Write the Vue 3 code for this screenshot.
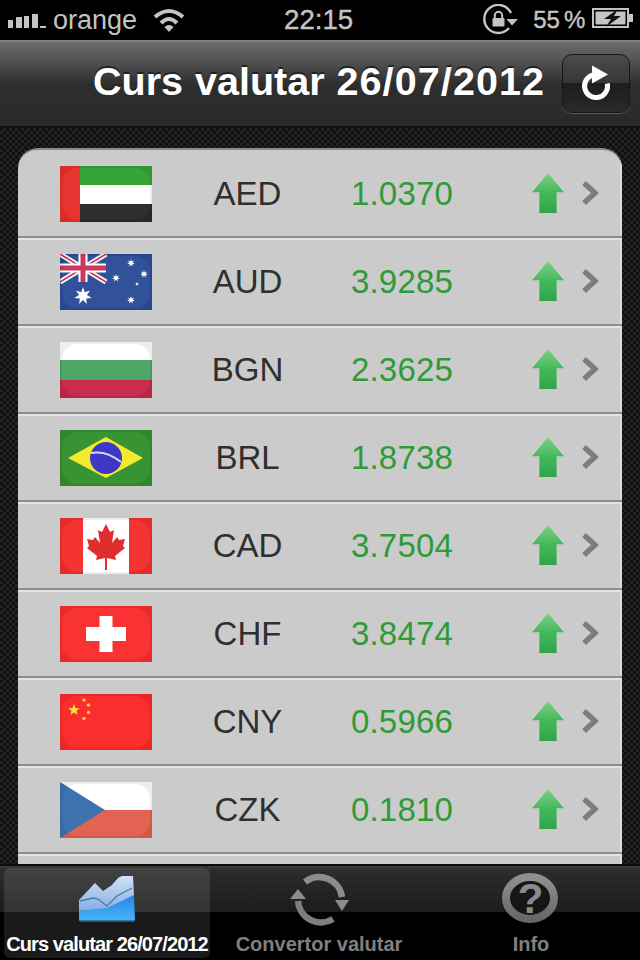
<script setup>
// rates shown in the list, flags are drawn per code in the template
const rates = [
  { code: 'AED', value: '1.0370' },
  { code: 'AUD', value: '3.9285' },
  { code: 'BGN', value: '2.3625' },
  { code: 'BRL', value: '1.8738' },
  { code: 'CAD', value: '3.7504' },
  { code: 'CHF', value: '3.8474' },
  { code: 'CNY', value: '0.5966' },
  { code: 'CZK', value: '0.1810' },
]

// point list for a star polygon
function star(cx, cy, r, n = 5, inner = 0.42) {
  const pts = []
  for (let i = 0; i < n * 2; i++) {
    const rad = i % 2 ? r * inner : r
    const a = (Math.PI * i) / n - Math.PI / 2
    pts.push((cx + rad * Math.cos(a)).toFixed(2) + ',' + (cy + rad * Math.sin(a)).toFixed(2))
  }
  return pts.join(' ')
}
</script>

<template>
  <div class="phone">
    <div class="status">
      <svg class="signal" width="40" height="14" viewBox="0 0 40 14">
        <rect x="0" y="6" width="5" height="8" fill="#c4c4c4" />
        <rect x="8" y="3" width="6" height="11" fill="#c4c4c4" />
        <rect x="16" y="2" width="5" height="12" fill="#c4c4c4" />
        <rect x="24" y="0" width="6" height="14" fill="#c4c4c4" />
        <rect x="32" y="12" width="6" height="2" fill="#c4c4c4" />
      </svg>
      <span class="carrier">orange</span>
      <svg class="wifi" width="32" height="24" viewBox="0 0 32 24" fill="none" stroke="#c4c4c4" stroke-width="4">
        <path d="M2 9 Q16 -3 30 9" />
        <path d="M8 15 Q16 7 24 15" />
        <path d="M16 24 L11.5 19 Q16 15 20.5 19 Z" fill="#c4c4c4" stroke="none" />
      </svg>
      <span class="clock">22:15</span>
      <svg class="lock" width="36" height="32" viewBox="0 0 36 32" fill="none">
        <path d="M26 24 A14 14 0 1 1 28 9" stroke="#c4c4c4" stroke-width="2.4" />
        <path d="M23.5 15 H35 L29 21.500 Z" fill="#c4c4c4" />
        <rect x="9.500" y="14" width="12" height="8.500" rx="1" fill="#c4c4c4" />
        <path d="M11.800 14 V11.500 A3.700 3.700 0 0 1 19.200 11.500 V14" stroke="#c4c4c4" stroke-width="2" />
      </svg>
      <span class="percent">55 %</span>
      <svg class="battery" width="42" height="20" viewBox="0 0 42 20" fill="none">
        <rect x="1" y="1" width="35" height="18" stroke="#c4c4c4" stroke-width="2" />
        <rect x="3.5" y="3.5" width="30" height="13" fill="#c4c4c4" />
        <rect x="37" y="6" width="4" height="8" fill="#c4c4c4" />
        <path d="M26 1 L12 11 H19 L14 19 L29 8 H22 Z" fill="#111" />
      </svg>
    </div>

    <div class="navbar">
      <h1 class="title">Curs valutar <span class="date">26/07/2012</span></h1>
      <button class="refresh">
        <svg width="32" height="38" viewBox="0 0 32 38" fill="none">
          <path d="M14 9.700 A11.500 11.500 0 1 0 27.300 18.600" stroke="#fff" stroke-width="5" />
          <path d="M12 0.500 L28 9.500 L12 18.500 Z" fill="#fff" />
        </svg>
      </button>
    </div>

    <div class="content">
      <div class="card">
        <div v-for="rate in rates" :key="rate.code" class="row">
          <div class="flag">
            <svg v-if="rate.code === 'AED'" width="92" height="56" viewBox="0 0 92 56">
              <rect width="92" height="19" fill="#35a334" />
              <rect y="19" width="92" height="19" fill="#fff" />
              <rect y="38" width="92" height="18" fill="#2a2a2a" />
              <rect width="20" height="56" fill="#e8302c" />
            </svg>
            <svg v-else-if="rate.code === 'AUD'" width="92" height="56" viewBox="0 0 92 56">
              <rect width="92" height="56" fill="#2d4f9a" />
              <path d="M0 0 L46 28 M46 0 L0 28" stroke="#fff" stroke-width="5" />
              <path d="M0 0 L46 28 M46 0 L0 28" stroke="#c9365a" stroke-width="1.6" />
              <path d="M23 0 V28 M0 14 H46" stroke="#fff" stroke-width="9" />
              <path d="M23 0 V28 M0 14 H46" stroke="#c9365a" stroke-width="5" />
              <polygon :points="star(23, 42, 9, 7, 0.45)" fill="#fff" />
              <polygon :points="star(71, 9, 4, 7, 0.45)" fill="#fff" />
              <polygon :points="star(56, 24, 4, 7, 0.45)" fill="#fff" />
              <polygon :points="star(84, 20, 4, 7, 0.45)" fill="#fff" />
              <polygon :points="star(77, 30, 2, 5)" fill="#fff" />
              <polygon :points="star(71, 46, 4, 7, 0.45)" fill="#fff" />
            </svg>
            <svg v-else-if="rate.code === 'BGN'" width="92" height="56" viewBox="0 0 92 56">
              <rect width="92" height="19" fill="#fff" />
              <rect y="18" width="92" height="20" fill="#4ba566" />
              <rect y="38" width="92" height="18" fill="#c9284b" />
            </svg>
            <svg v-else-if="rate.code === 'BRL'" width="92" height="56" viewBox="0 0 92 56">
              <rect width="92" height="56" fill="#35912f" />
              <polygon points="8,28 46,7 83,28 46,48" fill="#f2ea28" />
              <circle cx="46" cy="28" r="16" fill="#3a35c4" />
              <path d="M31 23 Q46 20 61 32" stroke="#d8d8f0" stroke-width="2" fill="none" />
            </svg>
            <svg v-else-if="rate.code === 'CAD'" width="92" height="56" viewBox="0 0 92 56">
              <rect width="92" height="56" fill="#f42f2f" />
              <rect x="23" width="46" height="56" fill="#fff" />
              <path d="M46 6 L50 14 L54 12 L52 25 L57 19 L59 22 L65 21 L63 28 L65 30 L55 38 L56 42 L47 40 L47 52 L45 52 L45 40 L36 42 L37 38 L27 30 L29 28 L27 21 L33 22 L35 19 L40 25 L38 12 L42 14 Z" fill="#e02a2a" />
            </svg>
            <svg v-else-if="rate.code === 'CHF'" width="92" height="56" viewBox="0 0 92 56">
              <rect width="92" height="56" fill="#f92f2f" />
              <rect x="39.500" y="10" width="13" height="36" fill="#fff" />
              <rect x="26" y="21" width="40" height="14" fill="#fff" />
            </svg>
            <svg v-else-if="rate.code === 'CNY'" width="92" height="56" viewBox="0 0 92 56">
              <rect width="92" height="56" fill="#fb2a2a" />
              <polygon :points="star(14, 16, 6)" fill="#f7e23c" />
              <circle cx="24" cy="6" r="1.800" fill="#f7c94c" />
              <circle cx="28.500" cy="11" r="1.800" fill="#f7c94c" />
              <circle cx="28.500" cy="18.500" r="1.800" fill="#f7c94c" />
              <circle cx="24" cy="24.500" r="1.800" fill="#f7c94c" />
            </svg>
            <svg v-else width="92" height="56" viewBox="0 0 92 56">
              <rect width="92" height="28" fill="#fff" />
              <rect y="28" width="92" height="28" fill="#e2604f" />
              <polygon points="0,0 45,28 0,56" fill="#3b70ae" />
            </svg>
          </div>
          <span class="code">{{ rate.code }}</span>
          <span class="value">{{ rate.value }}</span>
          <div class="up"></div>
          <svg class="chevron" width="18" height="26" viewBox="0 0 18 26" fill="none">
            <path d="M3 3 L14 13 L3 23" stroke="#7d7d7d" stroke-width="5.500" />
          </svg>
        </div>
        <div class="row"></div>
      </div>
    </div>

    <div class="tabbar">
      <div class="tab active">
        <svg width="60" height="48" viewBox="0 0 60 48">
          <defs>
            <linearGradient id="chartTop" x1="0" y1="0" x2="0" y2="1">
              <stop offset="0" stop-color="#d0e2f6" />
              <stop offset="1" stop-color="#86ade6" />
            </linearGradient>
            <linearGradient id="chartBottom" x1="0" y1="0" x2="0" y2="1">
              <stop offset="0" stop-color="#2186e6" />
              <stop offset="1" stop-color="#4ab4f7" />
            </linearGradient>
          </defs>
          <path d="M2 24 L18 7 L26 15 L35 9 L41 2 L45 0 L56 0 L57 20 L30 33 L2 35 Z" fill="url(#chartTop)" />
          <path d="M2 35 L30 32 L57 19 L58 44 Q58 45 56 45 L4 45 Q2 45 2 44 Z" fill="url(#chartBottom)" />
          <path d="M3 25 L16 22 L21 23 L30 30 L40 20 L55 12" fill="none" stroke="#3f7f9a" stroke-width="1.300" />
          <path d="M3 45 H57" stroke="#1f6a8f" stroke-width="1.500" />
        </svg>
        <span>Curs valutar 26/07/2012</span>
      </div>
      <div class="tab">
        <svg width="60" height="48" viewBox="0 0 60 48" fill="none">
          <path d="M16 6 A23 23 0 0 1 53 21" stroke="#8c8c8c" stroke-width="6.500" />
          <path d="M44 43 A23 23 0 0 1 9 25" stroke="#7e7e7e" stroke-width="6.500" />
          <path d="M46 24 H60 L53 35 Z" fill="#8c8c8c" />
          <path d="M1 23 H17 L9 13 Z" fill="#8c8c8c" />
        </svg>
        <span>Convertor valutar</span>
      </div>
      <div class="tab">
        <svg width="60" height="48" viewBox="0 0 60 48" fill="none">
          <defs>
            <linearGradient id="infoRing" x1="0" y1="0" x2="0" y2="1">
              <stop offset="0" stop-color="#909090" />
              <stop offset="1" stop-color="#686868" />
            </linearGradient>
          </defs>
          <ellipse cx="29" cy="22" rx="24" ry="21" fill="#161616" stroke="url(#infoRing)" stroke-width="8" />
          <text x="29.500" y="37" class="mark" text-anchor="middle">?</text>
        </svg>
        <span>Info</span>
      </div>
    </div>
  </div>
</template>

<style scoped>
.phone {
  width: 640px;
  height: 960px;
  display: flex;
  flex-direction: column;
  overflow: hidden;
  background: #000;
  font-family: "Liberation Sans", Arial, sans-serif;
}

.status {
  height: 40px;
  flex: none;
  display: flex;
  align-items: center;
  padding-left: 8px;
  color: #c4c4c4;
  font-size: 27px;
}

.signal {
  margin-top: 2px;
}

.carrier {
  margin-left: 5px;
}

.wifi {
  margin-left: 16px;
}

.clock {
  margin-left: 99px;
  font-size: 27.6px;
  -webkit-text-stroke: 0.4px #c4c4c4;
}

.lock {
  margin-left: 130px;
}

.percent {
  margin-left: 14px;
  font-size: 24px;
  word-spacing: -2.500px;
  -webkit-text-stroke: 0.4px #c4c4c4;
}

.battery {
  margin-left: 7px;
  margin-top: -4px;
}

.navbar {
  height: 88px;
  flex: none;
  display: flex;
  align-items: center;
  padding: 0 10px 0 93px;
  box-sizing: border-box;
  border-bottom: 2px solid #111;
  background: linear-gradient(#8a8a8a 0, #6a6a6a 3px, #4e4e4e 24px, #2e2e2e 44px, #2a2a2a 86px);
}

.title {
  margin: 0 0 3px;
  font-size: 39.5px;
  font-weight: bold;
  color: #fff;
  white-space: nowrap;
  word-spacing: 1px;
  text-shadow: 0 -2px 0 #222;
}

.date {
  letter-spacing: 1.1px;
}

.refresh {
  margin-left: auto;
  margin-top: 1px;
  width: 68px;
  height: 59px;
  padding: 0;
  display: flex;
  align-items: center;
  justify-content: center;
  border: 1px solid #151515;
  border-radius: 10px;
  background: linear-gradient(#4c4c4c, #363636 49%, #1d1d1d 50%, #2a2a2a);
  box-shadow: 0 1px 0 #5a5a5a;
}

.content {
  flex: 1;
  min-height: 0;
  overflow: hidden;
  padding: 20px 18px 0;
  background-color: #151515;
  background-image: conic-gradient(#232323 25%, #101010 0 50%, #232323 0 75%, #101010 0);
  background-size: 6px 6px;
}

.card {
  border-top: 2px solid #8a8a8a;
  border-radius: 20px 20px 0 0;
  overflow: hidden;
  background: #cbcbcb;
}

.row {
  height: 88px;
  box-sizing: border-box;
  display: flex;
  align-items: center;
  padding-left: 42px;
  box-shadow: inset 0 2px 0 #e4e4e4, inset 0 -2px 0 #8e8e8e, inset -2px 0 0 #dcdcdc;
}

.row:first-child {
  box-shadow: inset 0 -2px 0 #8e8e8e, inset -2px 0 0 #dcdcdc;
}

.flag {
  position: relative;
  width: 92px;
  height: 56px;
  flex: none;
  overflow: hidden;
}

.flag svg {
  display: block;
}

.flag::after {
  content: "";
  position: absolute;
  inset: 2px;
  border-radius: 15px;
  background: rgba(255, 255, 255, 0.02);
  box-shadow: 0 0 0 12px rgba(0, 0, 0, 0.07);
}

.code {
  width: 190px;
  box-sizing: border-box;
  padding-left: 1px;
  margin-bottom: 1px;
  text-align: center;
  font-size: 33px;
  color: #2f2f2f;
}

.value {
  width: 120px;
  margin-bottom: 1px;
  text-align: center;
  font-size: 33px;
  letter-spacing: 0.2px;
  color: #2f9a38;
}

.up {
  width: 32px;
  height: 40px;
  margin-left: 70px;
  margin-bottom: 2px;
  flex: none;
  background: linear-gradient(#7bd187, #43b95a 50%, #2fa448);
  clip-path: polygon(50% 0, 100% 48%, 77% 48%, 77% 100%, 23% 100%, 23% 48%, 0 48%);
}

.chevron {
  margin-left: 17px;
  margin-bottom: 3px;
  flex: none;
}

.tabbar {
  height: 96px;
  flex: none;
  box-sizing: border-box;
  display: grid;
  grid-template-columns: repeat(3, 1fr);
  padding: 2px 3px 2px 1px;
  border-top: 2px solid #0c0c0c;
  background: linear-gradient(#3a3a3a 0, #2c2c2c 4px, #1c1c1c 46px, #000 46px);
}

.tab {
  display: flex;
  flex-direction: column;
  align-items: center;
  margin: 0 3px;
  border-radius: 6px;
  color: #808080;
  font-size: 20px;
  font-weight: bold;
  white-space: nowrap;
}

.tab svg {
  margin-top: 8px;
  height: 48px;
  overflow: visible;
}

.tab span {
  margin-top: 9px;
}

.tab.active {
  background: rgba(255, 255, 255, 0.1);
  color: #fff;
}

.tab.active span {
  letter-spacing: -0.9px;
}

.mark {
  font-family: "Liberation Sans", Arial, sans-serif;
  font-size: 42px;
  font-weight: bold;
  fill: #8a8a8a;
}
</style>
